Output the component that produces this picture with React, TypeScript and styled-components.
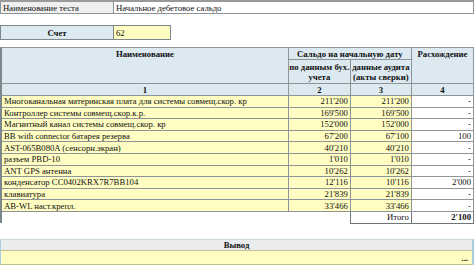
import React from 'react';
import styled, { createGlobalStyle } from 'styled-components';

const GlobalStyle = createGlobalStyle`
  body {
    margin: 0;
    background: #ffffff;
    font-family: "Liberation Serif", "Times New Roman", serif;
    font-size: 8.7px;
    color: #111;
  }
`;

const YELLOW = '#fffdc2';
const BLUE = '#dde9f1';
const GRAY = '#efefef';
const LINE = '#8e9599';

const Page = styled.div`
  width: 474px;
  display: flex;
  flex-direction: column;
  align-items: flex-start;
`;

const Table = styled.table<{ $w?: number; $mt?: number }>`
  width: ${(p) => p.$w ?? 474}px;
  margin-top: ${(p) => p.$mt ?? 0}px;
  border-collapse: collapse;
  table-layout: fixed;
  font-family: "Liberation Serif", "Times New Roman", serif;
  font-size: 8.7px;
  line-height: 10px;
  color: #111;
`;

const TopTable = styled(Table)`
  border-top: 2px solid #9a9a9a;
`;

const Cell = styled.td<{
  $bg?: string;
  $align?: 'left' | 'center' | 'right';
  $bold?: boolean;
  $h?: number;
  $line?: string;
}>`
  height: ${(p) => p.$h ?? 10.6}px;
  padding: 0 2px;
  background: ${(p) => p.$bg ?? '#fff'};
  text-align: ${(p) => p.$align ?? 'left'};
  font-weight: ${(p) => (p.$bold ? 700 : 400)};
  border: 1px solid ${(p) => p.$line ?? LINE};
  white-space: nowrap;
  overflow: hidden;
  vertical-align: middle;
`;

const Head = styled.th<{ $h?: number; $top?: boolean }>`
  height: ${(p) => p.$h ?? 10}px;
  padding: 1px 0 0;
  background: ${BLUE};
  border: 1px solid ${LINE};
  font-weight: 700;
  text-align: center;
  vertical-align: ${(p) => (p.$top ? 'top' : 'middle')};
  line-height: 10px;
`;

const MainTable = styled(Table)`
  border-left: 2px solid #7d878c;
`;

const Empty = styled.td`
  border: none;
  background: #fff;
`;

const ConclusionTable = styled(Table)`
  border-left: 1px solid #a9cde3;
  border-right: 2px solid #a9cde3;
`;

const ConclusionHead = styled.th`
  height: 10.5px;
  padding: 0;
  background: #eaeced;
  border-top: 1px solid #c9d6de;
  border-bottom: 1px solid #c2c28e;
  font-weight: 700;
  text-align: center;
  vertical-align: middle;
`;

const ConclusionBody = styled.td`
  height: 13px;
  padding: 0 4px;
  background: ${YELLOW};
  border-bottom: 1px solid #c2c28e;
  text-align: right;
  font-weight: 700;
`;

type Item = { name: string; book: string; audit: string; diff: string };

const items: Item[] = [
  { name: 'Многоканальная материнская плата для системы совмещ.скор. кр', book: "211'200", audit: "211'200", diff: '-' },
  { name: 'Контроллер системы совмещ.скор.к.р.', book: "169'500", audit: "169'500", diff: '-' },
  { name: 'Магнитный канал системы совмещ.скор. кр', book: "152'000", audit: "152'000", diff: '-' },
  { name: 'BB with connector батарея резерва', book: "67'200", audit: "67'100", diff: '100' },
  { name: 'AST-065B080A (сенсорн.экран)', book: "40'210", audit: "40'210", diff: '-' },
  { name: 'разъем PBD-10', book: "1'010", audit: "1'010", diff: '-' },
  { name: 'ANT GPS антенна', book: "10'262", audit: "10'262", diff: '-' },
  { name: 'конденсатор CC0402KRX7R7BB104', book: "12'116", audit: "10'116", diff: "2'000" },
  { name: 'клавиатура', book: "21'839", audit: "21'839", diff: '-' },
  { name: 'AB-WL наст.крепл.', book: "33'466", audit: "33'466", diff: '-' },
];

export default function App(): JSX.Element {
  return (
    <Page>
      <GlobalStyle />
      <TopTable>
        <colgroup>
          <col style={{ width: 113 }} />
          <col />
        </colgroup>
        <tbody>
          <tr>
            <Cell $bg={GRAY} $h={11}>Наименование теста</Cell>
            <Cell $h={11}>Начальное дебетовое сальдо</Cell>
          </tr>
        </tbody>
      </TopTable>

      <Table $w={171} $mt={11}>
        <colgroup>
          <col style={{ width: 113 }} />
          <col />
        </colgroup>
        <tbody>
          <tr>
            <Cell $bg={BLUE} $align="center" $bold $h={13} $line="#7d878c">Счет</Cell>
            <Cell $bg={YELLOW} $h={13} $line="#7d878c">62</Cell>
          </tr>
        </tbody>
      </Table>

      <MainTable $mt={7}>
        <colgroup>
          <col style={{ width: 287 }} />
          <col style={{ width: 62 }} />
          <col style={{ width: 61 }} />
          <col style={{ width: 62 }} />
        </colgroup>
        <thead>
          <tr>
            <Head rowSpan={2} $top>Наименование</Head>
            <Head colSpan={2}>Сальдо на начальную дату</Head>
            <Head rowSpan={2} $top>Расхождение</Head>
          </tr>
          <tr>
            <Head $h={22}>по данным бух. учета</Head>
            <Head $h={22}>данные аудита (акты сверки)</Head>
          </tr>
          <tr>
            <Head>1</Head>
            <Head>2</Head>
            <Head>3</Head>
            <Head>4</Head>
          </tr>
        </thead>
        <tbody>
          {items.map((it) => (
            <tr key={it.name}>
              <Cell $bg={YELLOW}>{it.name}</Cell>
              <Cell $bg={YELLOW} $align="right">{it.book}</Cell>
              <Cell $bg={YELLOW} $align="right">{it.audit}</Cell>
              <Cell $align="right">{it.diff}</Cell>
            </tr>
          ))}
          <tr>
            <Empty colSpan={2} />
            <Cell $align="right" $line="#6e767a">Итого</Cell>
            <Cell $align="right" $bold $line="#6e767a">2'100</Cell>
          </tr>
        </tbody>
      </MainTable>

      <ConclusionTable $mt={15}>
        <tbody>
          <tr>
            <ConclusionHead>Вывод</ConclusionHead>
          </tr>
          <tr>
            <ConclusionBody>...</ConclusionBody>
          </tr>
        </tbody>
      </ConclusionTable>
    </Page>
  );
}
